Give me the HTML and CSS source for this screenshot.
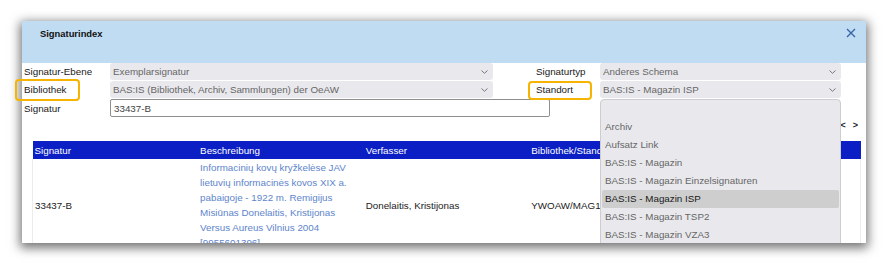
FILE: index.html
```html
<!DOCTYPE html>
<html lang="de">
<head>
<meta charset="utf-8">
<title>Signaturindex</title>
<link rel="stylesheet" href="styles.css">
</head>
<body>
<div class="stage">
  <div class="dialog">
    <div class="dlg-head">
      <span class="dlg-title">Signaturindex</span>
      <span class="dlg-close" aria-label="Schließen">
        <svg width="10" height="10" viewBox="0 0 10 10"><path d="M1 1 L9 9 M9 1 L1 9" stroke="#3a65a6" stroke-width="1.4" fill="none"/></svg>
      </span>
    </div>
    <div class="form">
      <label class="lbl">Signatur-Ebene</label>
      <div class="sel"><span>Exemplarsignatur</span><svg class="chev" width="7" height="4" viewBox="0 0 7 4"><path d="M0.5 0.5 L3.5 3.3 L6.5 0.5" stroke="#777" stroke-width="1" fill="none"/></svg></div>
      <span></span>
      <label class="lbl">Signaturtyp</label>
      <div class="sel"><span>Anderes Schema</span><svg class="chev" width="7" height="4" viewBox="0 0 7 4"><path d="M0.5 0.5 L3.5 3.3 L6.5 0.5" stroke="#777" stroke-width="1" fill="none"/></svg></div>

      <label class="lbl">Bibliothek</label>
      <div class="sel"><span>BAS:IS (Bibliothek, Archiv, Sammlungen) der OeAW</span><svg class="chev" width="7" height="4" viewBox="0 0 7 4"><path d="M0.5 0.5 L3.5 3.3 L6.5 0.5" stroke="#777" stroke-width="1" fill="none"/></svg></div>
      <span></span>
      <label class="lbl">Standort</label>
      <div class="sel open"><span>BAS:IS - Magazin ISP</span><svg class="chev" width="7" height="4" viewBox="0 0 7 4"><path d="M0.5 0.5 L3.5 3.3 L6.5 0.5" stroke="#777" stroke-width="1" fill="none"/></svg>
        <ul class="listbox">
          <li></li>
          <li>Archiv</li>
          <li>Aufsatz Link</li>
          <li>BAS:IS - Magazin</li>
          <li>BAS:IS - Magazin Einzelsignaturen</li>
          <li class="selected">BAS:IS - Magazin ISP</li>
          <li>BAS:IS - Magazin TSP2</li>
          <li>BAS:IS - Magazin VZA3</li>
          <li>BAS:IS - Magazin VZA4</li>
        </ul>
      </div>

      <label class="lbl">Signatur</label>
      <div class="input-cell"><div class="input">33437-B</div></div>
    </div>
    <div class="pager"><span>&lt;</span><span>&gt;</span></div>
    <table class="grid">
      <thead>
        <tr><th>Signatur</th><th>Beschreibung</th><th>Verfasser</th><th>Bibliothek/Standort</th><th>Exemplare</th></tr>
      </thead>
      <tbody>
        <tr>
          <td>33437-B</td>
          <td class="desc"><a href="#">Informacinių kovų kryžkelėse JAV lietuvių informacinės kovos XIX a. pabaigoje - 1922 m. Remigijus Misiūnas Donelaitis, Kristijonas Versus Aureus Vilnius 2004 [9955601396]</a></td>
          <td>Donelaitis, Kristijonas</td>
          <td>YWOAW/MAG1</td>
          <td>1</td>
        </tr>
      </tbody>
    </table>
  </div>
  <div class="mark mark-bib"></div>
  <div class="mark mark-standort"></div>
</div>
</body>
</html>
```
FILE: styles.css
```css
html, body {
  margin: 0;
  background: #fff;
}
body {
  font-family: "Liberation Sans", Arial, sans-serif;
  font-size: 9.8px;
  color: #1e1e1e;
}
.stage {
  position: relative;
  padding: 21px 0 0 22px;
  height: 263px;
  box-sizing: border-box;
}
.dialog {
  width: 844px;
  height: 222px;
  background: #fff;
  overflow: hidden;
  box-shadow: 0 3px 10px 2px rgba(0, 0, 0, 0.55);
}
.dlg-head {
  height: 42px;
  box-sizing: border-box;
  background: #c0dcf2;
  display: flex;
  justify-content: space-between;
  align-items: flex-start;
  padding: 6px 10px 0 18px;
}
.dlg-title {
  font-weight: bold;
  font-size: 9.4px;
  line-height: 13px;
  color: #111;
}
.dlg-close {
  display: flex;
  margin-top: 1px;
}
.form {
  display: grid;
  grid-template-columns: 86px 383px 43px 64px 241px;
  grid-template-rows: 17px 17px 18px;
  row-gap: 1px;
  padding-left: 2px;
}
.lbl {
  display: flex;
  align-items: center;
  color: #1a1a1a;
}
.sel {
  position: relative;
  display: flex;
  align-items: center;
  justify-content: space-between;
  background: #e9e9ed;
  border-radius: 3px;
  padding: 0 5px 0 3px;
  color: #666;
}
.chev {
  flex: none;
}
.listbox {
  position: absolute;
  z-index: 5;
  top: 18px;
  left: 0;
  width: 241px;
  height: 170px;
  box-sizing: border-box;
  margin: 0;
  padding: 0;
  list-style: none;
  background: #e9e9ed;
  border: 1px solid #cdcdd0;
  border-radius: 4px;
}
.listbox li {
  height: 18px;
  line-height: 18px;
  padding-left: 4px;
  color: #666;
  white-space: nowrap;
}
.listbox li.selected {
  margin: 0 1px;
  padding-left: 3px;
  background: #cecece;
  border-radius: 2px;
  color: #1a1a1a;
}
.input-cell {
  grid-column: 2 / 6;
  display: flex;
}
.input {
  width: 440px;
  box-sizing: border-box;
  border: 1px solid #8f8f8f;
  border-radius: 2px;
  padding: 0 3px;
  display: flex;
  align-items: center;
  color: #444;
}
.pager {
  height: 23px;
  display: flex;
  justify-content: flex-end;
  gap: 7px;
  padding-right: 8px;
  line-height: 16px;
  font-weight: bold;
  font-size: 9px;
  color: #222;
}
.grid {
  margin: 1px 0 0 10px;
  width: 829px;
  table-layout: fixed;
  border-collapse: collapse;
}
.grid th {
  height: 18px;
  padding: 0 2px;
  background: #0b1fc4;
  color: #fff;
  font-weight: normal;
  text-align: left;
  white-space: nowrap;
  overflow: hidden;
}
.grid td {
  padding: 1px 2px 0;
  vertical-align: middle;
  color: #222;
}
.grid td:first-child {
  border-left: 1px solid #ececec;
}
.grid td:last-child {
  border-right: 1px solid #ececec;
}
.grid td.desc {
  line-height: 15px;
}
.grid td.desc a {
  color: #5e85cb;
  text-decoration: none;
}
.mark {
  position: absolute;
  box-sizing: border-box;
  border: 2.3px solid #f6b400;
  border-radius: 4px;
}
.mark-bib {
  left: 15px;
  top: 79px;
  width: 65px;
  height: 22px;
}
.mark-standort {
  left: 528px;
  top: 81px;
  width: 64px;
  height: 19px;
}
```
